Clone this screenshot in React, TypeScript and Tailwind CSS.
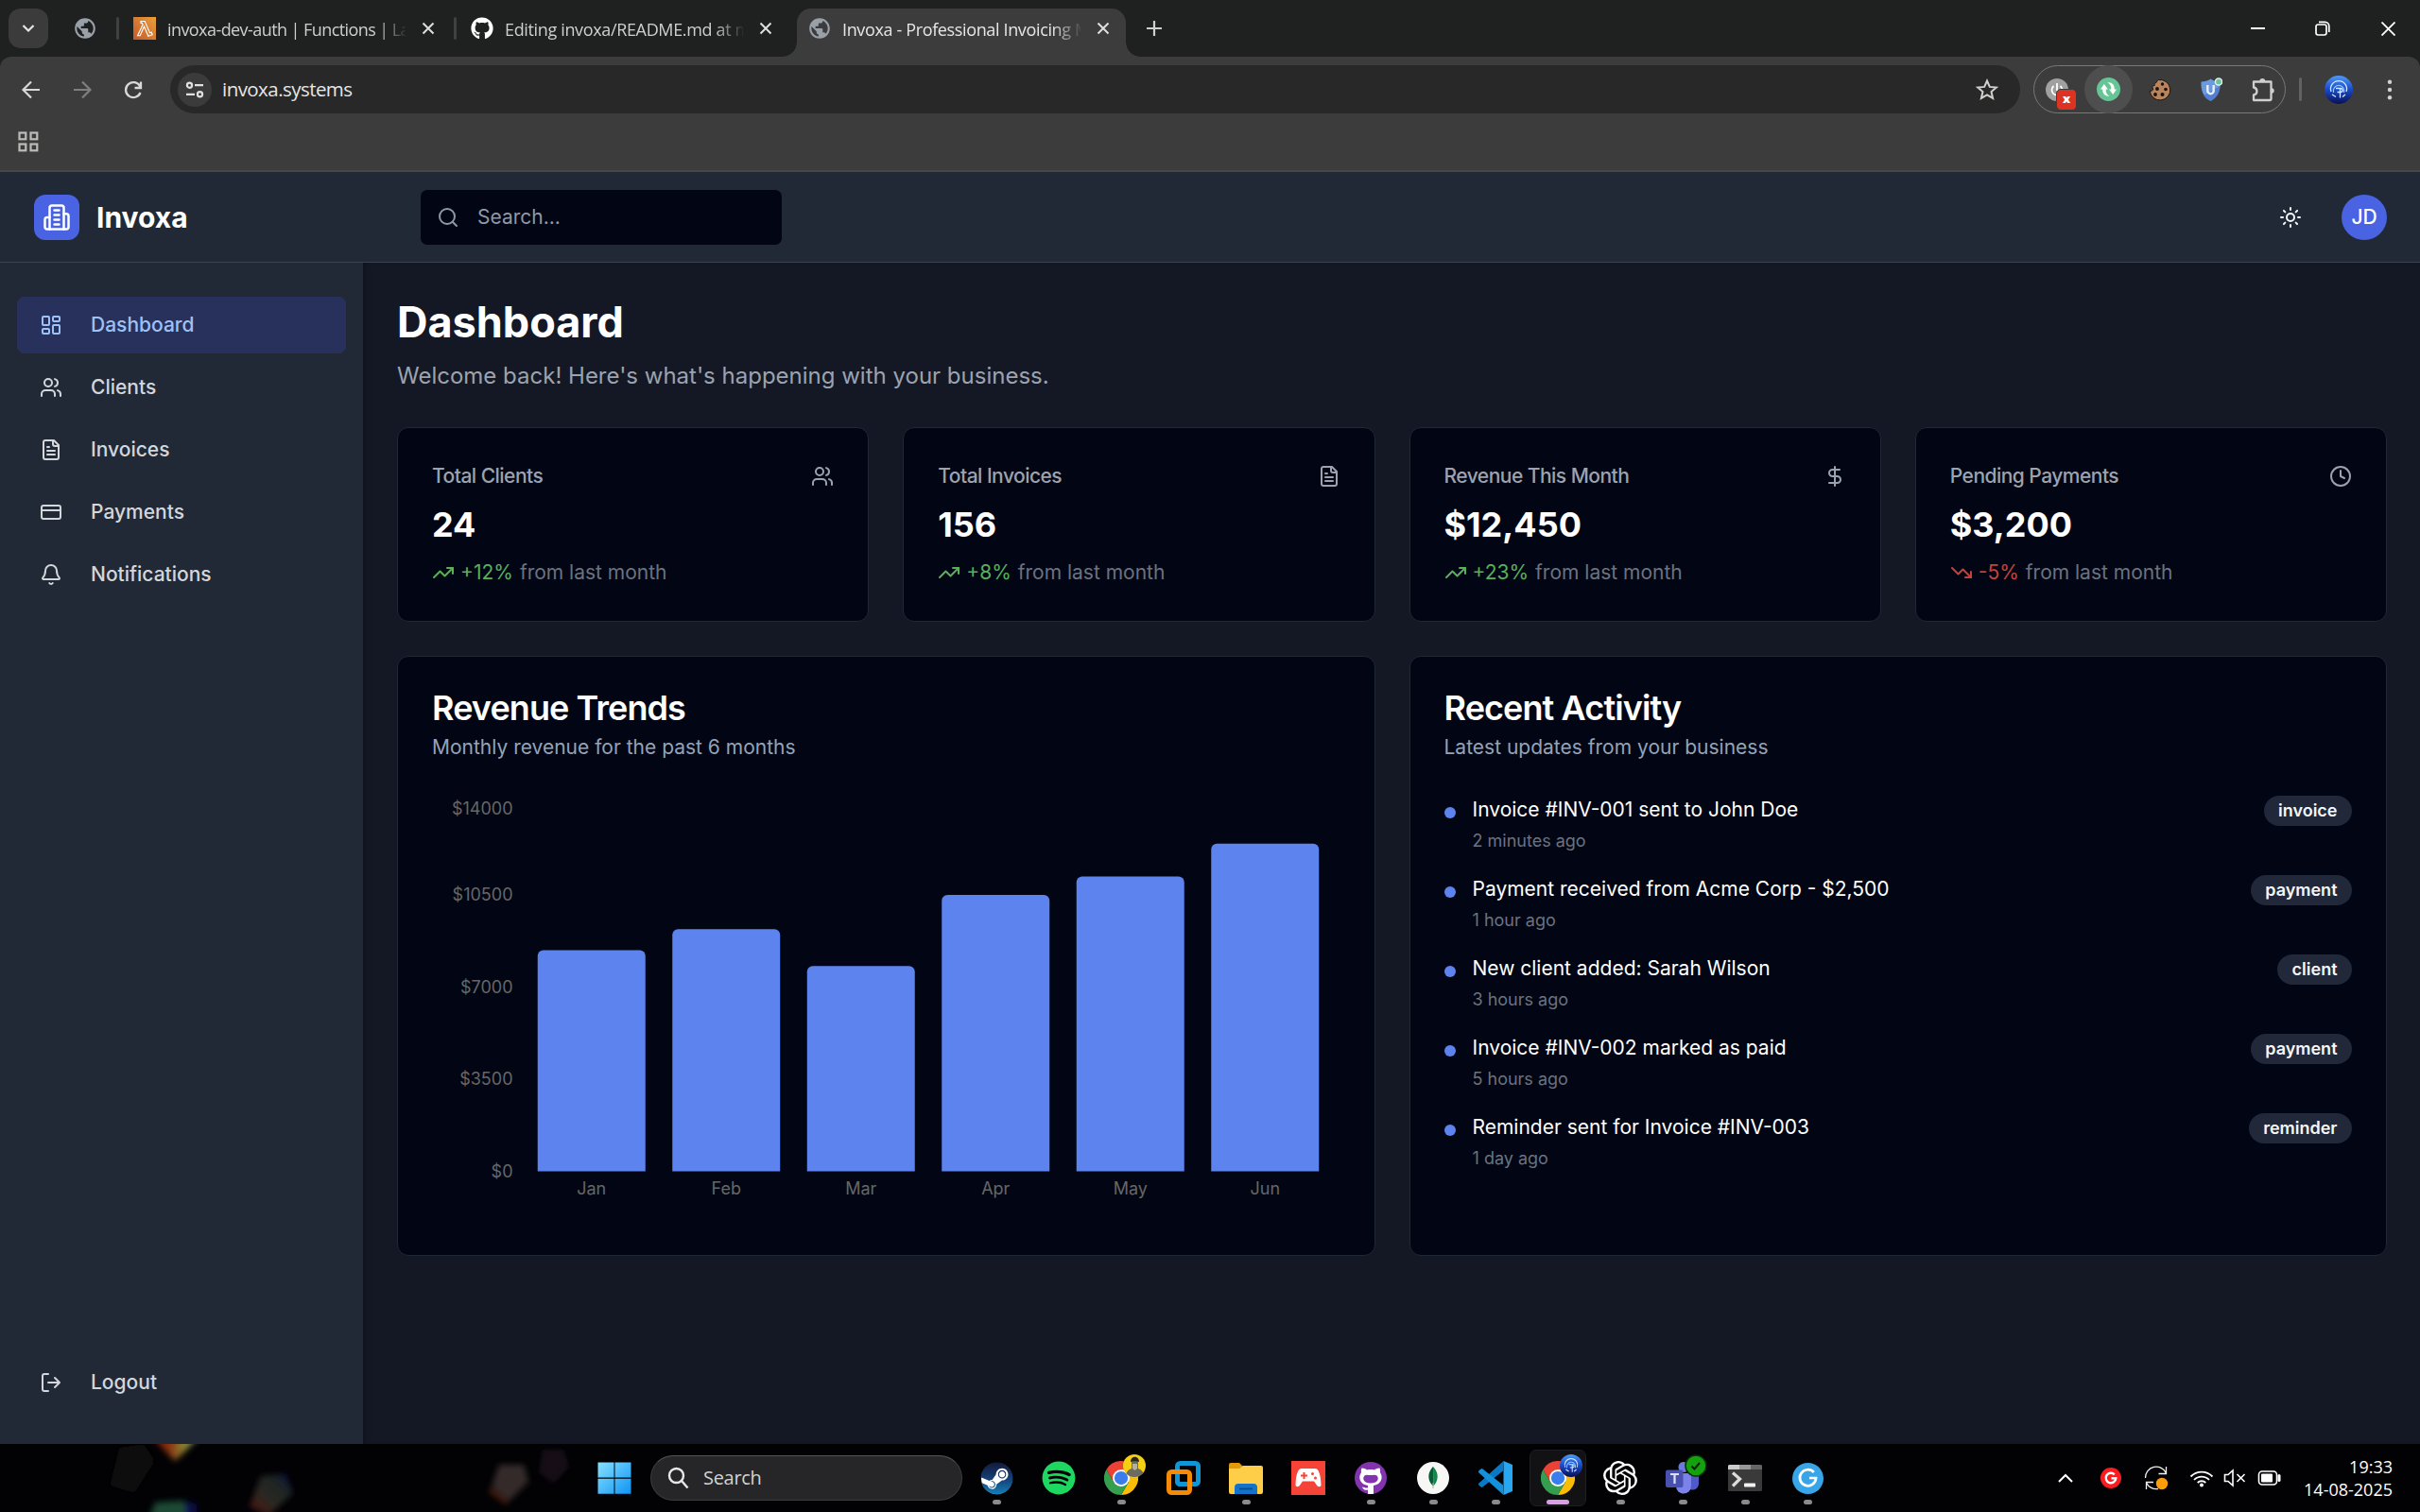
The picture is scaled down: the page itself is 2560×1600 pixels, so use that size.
import React from "react";
import { MdPublic } from "react-icons/md";
import { FaGithub, FaSpotify, FaSteam } from "react-icons/fa";
import { SiOpenai } from "react-icons/si";

type IconProps = { className?: string };

/* ---------- line icons ---------- */

function Line({ className = "size-6", sw = 2, children }: { className?: string; sw?: number; children: React.ReactNode }) {
  return (
    <svg viewBox="0 0 24 24" fill="none" stroke="currentColor" strokeWidth={sw} strokeLinecap="round" strokeLinejoin="round" className={"shrink-0 " + className}>
      {children}
    </svg>
  );
}

const BuildingIcon = (p: IconProps) => (
  <Line {...p}>
    <path d="M6 22V4a2 2 0 0 1 2-2h8a2 2 0 0 1 2 2v18Z" />
    <path d="M6 12H4a2 2 0 0 0-2 2v6a2 2 0 0 0 2 2h2" />
    <path d="M18 9h2a2 2 0 0 1 2 2v9a2 2 0 0 1-2 2h-2" />
    <path d="M10 6h4M10 10h4M10 14h4M10 18h4" />
  </Line>
);
const DashboardIcon = (p: IconProps) => (
  <Line {...p}>
    <rect width="7" height="9" x="3" y="3" rx="1" />
    <rect width="7" height="5" x="14" y="3" rx="1" />
    <rect width="7" height="9" x="14" y="12" rx="1" />
    <rect width="7" height="5" x="3" y="16" rx="1" />
  </Line>
);
const UsersIcon = (p: IconProps) => (
  <Line {...p}>
    <path d="M16 21v-2a4 4 0 0 0-4-4H6a4 4 0 0 0-4 4v2" />
    <circle cx="9" cy="7" r="4" />
    <path d="M22 21v-2a4 4 0 0 0-3-3.87" />
    <path d="M16 3.13a4 4 0 0 1 0 7.75" />
  </Line>
);
const FileIcon = (p: IconProps) => (
  <Line {...p}>
    <path d="M15 2H6a2 2 0 0 0-2 2v16a2 2 0 0 0 2 2h12a2 2 0 0 0 2-2V7Z" />
    <path d="M14 2v4a2 2 0 0 0 2 2h4" />
    <path d="M10 9H8M16 13H8M16 17H8" />
  </Line>
);
const CardIcon = (p: IconProps) => (
  <Line {...p}>
    <rect width="20" height="14" x="2" y="5" rx="2" />
    <path d="M2 10h20" />
  </Line>
);
const BellIcon = (p: IconProps) => (
  <Line {...p}>
    <path d="M10.268 21a2 2 0 0 0 3.464 0" />
    <path d="M3.262 15.326A1 1 0 0 0 4 17h16a1 1 0 0 0 .74-1.673C19.41 13.956 18 12.499 18 8A6 6 0 0 0 6 8c0 4.499-1.411 5.956-2.738 7.326" />
  </Line>
);
const LogoutIcon = (p: IconProps) => (
  <Line {...p}>
    <path d="M9 21H5a2 2 0 0 1-2-2V5a2 2 0 0 1 2-2h4" />
    <path d="m16 17 5-5-5-5M21 12H9" />
  </Line>
);
const SearchIcon = (p: IconProps) => (
  <Line {...p}>
    <circle cx="11" cy="11" r="8" />
    <path d="m21 21-4.3-4.3" />
  </Line>
);
const SunIcon = (p: IconProps) => (
  <Line {...p}>
    <circle cx="12" cy="12" r="4" />
    <path d="M12 2v2M12 20v2M4.93 4.93l1.41 1.41M17.66 17.66l1.41 1.41M2 12h2M20 12h2M6.34 17.66l-1.41 1.41M19.07 4.93l-1.41 1.41" />
  </Line>
);
const DollarIcon = (p: IconProps) => (
  <Line {...p}>
    <path d="M12 2v20M17 5H9.5a3.5 3.5 0 0 0 0 7h5a3.5 3.5 0 0 1 0 7H6" />
  </Line>
);
const ClockIcon = (p: IconProps) => (
  <Line {...p}>
    <circle cx="12" cy="12" r="10" />
    <path d="M12 6v6l4 2" />
  </Line>
);
const UpIcon = (p: IconProps) => (
  <Line {...p}>
    <path d="m22 7-8.5 8.5-5-5L2 17" />
    <path d="M16 7h6v6" />
  </Line>
);
const DownIcon = (p: IconProps) => (
  <Line {...p}>
    <path d="m22 17-8.5-8.5-5 5L2 7" />
    <path d="M16 17h6v-6" />
  </Line>
);

/* ---------- browser chrome ---------- */

const Close = () => (
  <svg viewBox="0 0 16 16" className="size-4 shrink-0 text-[#dededc]" stroke="currentColor" strokeWidth="2" fill="none">
    <path d="M2.5 2.5l11 11M13.5 2.5l-11 11" />
  </svg>
);

function TabTitle({ children, className }: { children: string; className: string }) {
  return (
    <div className={"w-[252px] whitespace-nowrap pt-[2px] text-[18px] leading-[26px] [mask-image:linear-gradient(to_right,black_88%,transparent_101%)] " + className}>
      {children}
    </div>
  );
}

function TabStrip() {
  return (
    <div className="flex h-[60px] items-center bg-[#1f2120] pl-[9px] text-[#cfcfcd]">
      <div className="flex size-[42px] items-center justify-center rounded-[13px] bg-[#3b3b3b]">
        <svg viewBox="0 0 16 16" className="size-4" stroke="#e6e6e4" strokeWidth="2.2" fill="none">
          <path d="M2.5 5l5.500 5.500L13.500 5" />
        </svg>
      </div>
      <MdPublic className="ml-[26px] size-[26px] text-[#9aa0a8]" />
      <div className="ml-[20px] h-6 w-[3px] rounded bg-[#3f403f]" />
      <svg viewBox="0 0 24 24" className="ml-[15px] size-6">
        <defs>
          <linearGradient id="lam" x1="0" y1="1" x2="1" y2="0">
            <stop offset="0" stopColor="#c3592b" />
            <stop offset="1" stopColor="#ec9f3a" />
          </linearGradient>
        </defs>
        <rect width="24" height="24" fill="url(#lam)" />
        <path d="M8 4.500h4.200l5.300 12.300 1.800-.6.9 2.500-4.300 1.500-4.400-10.200-4.300 9.800H4.500l5.600-11.700-.9-1.700H8z" fill="none" stroke="#fff" strokeWidth="1.100" />
      </svg>
      <div className="ml-3">
        <TabTitle className="tracking-[-0.57px]">invoxa-dev-auth | Functions | La</TabTitle>
      </div>
      <div className="ml-4"><Close /></div>
      <div className="ml-[19px] h-6 w-[3px] rounded bg-[#3f403f]" />
      <FaGithub className="ml-[15px] size-6 text-white" />
      <div className="ml-[12px]">
        <TabTitle className="tracking-[-0.35px]">Editing invoxa/README.md at m</TabTitle>
      </div>
      <div className="ml-[16px]"><Close /></div>
      <div className="relative ml-[25px] mt-[9px] flex h-[51px] w-[348px] items-center rounded-t-[15px] bg-[#3c3c3c] pb-[9px] pl-[11px] text-[#e6e6e4]">
        <div className="absolute -left-[15px] bottom-0 size-[15px] bg-[radial-gradient(circle_at_0_0,transparent_14.500px,#3c3c3c_15px)]" />
        <div className="absolute -right-[15px] bottom-0 size-[15px] bg-[radial-gradient(circle_at_100%_0,transparent_14.500px,#3c3c3c_15px)]" />
        <MdPublic className="size-[26px] text-[#9aa0a8]" />
        <div className="ml-[11px]">
          <TabTitle className="tracking-[-0.36px]">Invoxa - Professional Invoicing M</TabTitle>
        </div>
        <div className="ml-4"><Close /></div>
      </div>
      <svg viewBox="0 0 18 18" className="ml-[21px] size-[18px]" stroke="#d0d0ce" strokeWidth="2.200">
        <path d="M9 1v16M1 9h16" />
      </svg>
      <div className="ml-auto flex items-center pr-[26px]">
        <svg viewBox="0 0 15 15" className="size-[15px]" stroke="#fff" strokeWidth="2"><path d="M0 7h15" /></svg>
        <svg viewBox="0 0 16 16" className="ml-[53px] size-4" stroke="#fff" strokeWidth="1.700" fill="none">
          <rect x="1" y="4" width="11" height="11" rx="2.200" />
          <path d="M4 1.300h6.500a4.300 4.300 0 0 1 4.300 4.300V12" />
        </svg>
        <svg viewBox="0 0 15 15" className="ml-[54px] size-[15px]" stroke="#fff" strokeWidth="1.800"><path d="M.5.5l14 14M14.500.5l-14 14" /></svg>
      </div>
    </div>
  );
}

const Avatar = ({ className = "size-[30px]" }: IconProps) => (
  <svg viewBox="0 0 30 30" className={className}>
    <defs>
      <linearGradient id="ava" x1="0" y1="0" x2="0" y2="1">
        <stop offset="0" stopColor="#4f9af5" />
        <stop offset=".45" stopColor="#1d4fd0" />
        <stop offset="1" stopColor="#080f55" />
      </linearGradient>
    </defs>
    <circle cx="15" cy="15" r="15" fill="url(#ava)" />
    <g fill="none" stroke="#d6ecff" strokeWidth="1.300">
      <path d="M7 17a8.500 8.500 0 1 1 16 0" />
      <path d="M9.500 18a5.800 5.800 0 1 1 11 0" stroke="#8ccbff" />
      <path d="M12 13.500h5a2 2 0 0 1 0 4h-3.500M16.500 13.500v10M8 20l4 2.500M22 20l-3 2.500" />
    </g>
  </svg>
);

function Toolbar() {
  return (
    <div className="bg-[#1f2120]">
      <div className="h-[122px] rounded-t-[12px] border-b-2 border-[#474746] bg-[#3c3c3c]">
        <div className="flex h-[69px] items-center pl-[22px]">
          <svg viewBox="0 0 22 22" className="size-[22px]" stroke="#d8d8d6" strokeWidth="2.200" fill="none"><path d="M20 11H3M11 2.500L2.500 11l8.500 8.500" /></svg>
          <svg viewBox="0 0 22 22" className="ml-8 size-[22px]" stroke="#7f7f7e" strokeWidth="2.200" fill="none"><path d="M2 11h17M11 2.500l8.500 8.500-8.500 8.500" /></svg>
          <svg viewBox="0 0 22 22" className="ml-8 size-[22px]" stroke="#d8d8d6" strokeWidth="2.300" fill="none"><path d="M18.500 14a8 8 0 1 1-.3-6.500M19 2.500V9h-6.500" /></svg>
          <div className="ml-7 flex h-[51px] w-[1957px] items-center rounded-full bg-[#282828] pl-2 pr-[23px]">
            <div className="flex size-9 items-center justify-center rounded-full bg-[#3b3b3b]">
              <svg viewBox="0 0 20 20" className="size-5" stroke="#e0e0de" strokeWidth="2.200" fill="none">
                <circle cx="4.500" cy="5.200" r="2.600" /><path d="M10 5.200h9M1 14.800h9" /><circle cx="15.500" cy="14.800" r="2.600" />
              </svg>
            </div>
            <div className="ml-[11px] text-[20.500px] leading-none tracking-[-0.55px] text-[#e6e6e4]">invoxa.systems</div>
            <svg viewBox="0 0 24 24" className="ml-auto size-6" stroke="#d0d0ce" strokeWidth="2" fill="none"><path d="M12 2.500l2.800 6.400 7 .6-5.300 4.600 1.600 6.800-6.100-3.600-6.100 3.600 1.600-6.800L2.200 9.500l7-.6z" /></svg>
          </div>
          <div className="ml-[14px] flex h-[51px] w-[267px] items-center rounded-full border border-[#787878] pl-[12px]">
            <div className="relative size-6">
              <svg viewBox="0 0 24 24" className="size-6" fill="none"><circle cx="12" cy="12" r="12" fill="#a0a0a0" /><path d="M8.500 8a5.500 5.500 0 1 0 7 0M12 5v8" stroke="#fff" strokeWidth="1.800" /></svg>
              <div className="absolute left-[11px] top-[11px] flex h-[23px] w-[22px] items-center justify-center rounded-[5px] border border-[#3c3c3c] bg-[#dd3322] pb-px text-[13px] font-extrabold leading-none text-white">x</div>
            </div>
            <div className="ml-[17px] flex size-[51px] shrink-0 items-center justify-center rounded-full bg-[#4e4e4e]">
              <svg viewBox="0 0 24 24" className="size-[25px]">
                <circle cx="12" cy="12" r="12" fill="#66c596" />
                <path d="M11 5.200c4.600-.6 7.300 2.600 7 6.800h2.200l-3.700 5.300-4-5.300h2.200c.2-3.300-1-5.600-3.700-6.800z" fill="#fff" />
                <path d="M13 18.800c-4.600.6-7.300-2.600-7-6.800H3.800l3.700-5.300 4 5.300H9.300c-.2 3.300 1 5.600 3.700 6.800z" fill="#fff" />
              </svg>
            </div>
            <svg viewBox="0 0 24 24" className="ml-[17px] size-6">
              <path d="M10.500 1.500A10.800 10.800 0 1 1 1.200 13c2 .6 3.300-.2 3.600-2-1.600-1.500-.8-3.500 1.500-3.500-.6-1.800.2-3 1.700-3C8.500 3.500 9 2 10.500 1.500z" fill="#b8835d" stroke="#1b1512" strokeWidth="1" />
              <g fill="#17110f"><circle cx="14.500" cy="6" r="1.700" /><circle cx="9" cy="11" r="1.900" /><circle cx="18" cy="11.500" r="1.800" /><circle cx="7" cy="17" r="1.900" /><circle cx="14.500" cy="17" r="2" /></g>
            </svg>
            <svg viewBox="0 0 24 26" className="ml-[30px] h-[26px] w-6">
              <path d="M11.500 1.500C15 4 18 4 21.500 4.500c.5 9-2 16-10 20.500C3.500 20.500 1 13.500 1.500 4.500 5 4 8 4 11.500 1.500z" fill="#6a9be0" />
              <path d="M11.500 25c8-4.500 10.500-11.500 10-16L4 19c1.600 2.500 4 4.500 7.500 6z" fill="#4c72c8" opacity=".7" />
              <path d="M8.300 8v6a3.200 3.200 0 0 0 6.400 0V8" fill="none" stroke="#e6f0fc" strokeWidth="2.400" />
              <circle cx="20" cy="4.500" r="3.600" fill="#6cc29c" stroke="#e4efe9" strokeWidth="1.500" />
            </svg>
            <svg viewBox="0 0 26 26" className="ml-[30px] size-[26px]" fill="none" stroke="#cfcfcd" strokeWidth="2.300" strokeLinejoin="round">
              <path d="M3 4.500h18.500v18.500a1 1 0 0 1-1 1H3v-5.500c4.600-.6 4.600-7.200 0-8z" />
              <path d="M9.300 4a3 3 0 0 1 6 0zM22 11.300a2.700 2.700 0 0 1 0 5.400z" fill="#cfcfcd" stroke="none" />
            </svg>
          </div>
          <div className="ml-[14px] h-[25px] w-[3px] rounded bg-[#626262]" />
          <Avatar className="ml-6 size-[30px]" />
          <svg viewBox="0 0 6 22" className="ml-9 h-[22px] w-[6px]" fill="#d2d2d0"><circle cx="3" cy="2.800" r="2.200" /><circle cx="3" cy="11" r="2.200" /><circle cx="3" cy="19.200" r="2.200" /></svg>
        </div>
        <div className="flex h-[42px] items-center pl-[19px]">
          <svg viewBox="0 0 22 22" className="size-[22px]" fill="none" stroke="#bcbcba" strokeWidth="2.200">
            <rect x="1.500" y="1.500" width="6.800" height="6.800" /><rect x="13.500" y="1.500" width="6.800" height="6.800" /><rect x="1.500" y="13.500" width="6.800" height="6.800" /><rect x="13.500" y="13.500" width="6.800" height="6.800" />
          </svg>
        </div>
      </div>
    </div>
  );
}

/* ---------- application ---------- */

function AppHeader() {
  return (
    <header className="relative z-10 flex h-24 shrink-0 items-center border-b border-[#3a4350] bg-[#212936] pl-9 pr-[35px]">
      <div className="flex size-12 items-center justify-center rounded-xl bg-[#4963e3] text-white"><BuildingIcon className="size-[30px]" /></div>
      <div className="ml-[18px] w-[343px] text-[30px] font-bold leading-none text-white">Invoxa</div>
      <div className="flex h-[58px] w-[382px] items-center rounded-[7px] bg-[#020614] pl-[17px] text-[#8f98a8]">
        <SearchIcon />
        <span className="ml-[19px] text-[21px] leading-none">Search...</span>
      </div>
      <SunIcon className="ml-auto size-6 text-[#f4f6f8]" />
      <div className="ml-[42px] flex size-12 items-center justify-center rounded-full bg-[#4963e3] text-[21px] font-medium text-white">JD</div>
    </header>
  );
}

const nav = [
  { label: "Dashboard", Icon: DashboardIcon, active: true },
  { label: "Clients", Icon: UsersIcon },
  { label: "Invoices", Icon: FileIcon },
  { label: "Payments", Icon: CardIcon },
  { label: "Notifications", Icon: BellIcon },
];

function Sidebar() {
  return (
    <aside className="flex w-96 shrink-0 flex-col bg-[#212936] px-[18px] pb-[35px] pt-9">
      <nav className="flex flex-col gap-1.5">
        {nav.map(({ label, Icon, active }) => (
          <div key={label} className={"flex h-[60px] items-center gap-[30px] rounded-[8px] pl-6 text-[21px] font-medium " + (active ? "bg-[#28315c] text-[#9dc2f7]" : "text-[#d3d6db]")}>
            <Icon />
            {label}
          </div>
        ))}
      </nav>
      <div className="mt-auto flex h-[60px] items-center gap-[30px] pl-6 text-[21px] font-medium text-[#d3d6db]">
        <LogoutIcon />
        Logout
      </div>
    </aside>
  );
}

const stats = [
  { title: "Total Clients", value: "24", change: "+12%", Icon: UsersIcon },
  { title: "Total Invoices", value: "156", change: "+8%", Icon: FileIcon },
  { title: "Revenue This Month", value: "$12,450", change: "+23%", Icon: DollarIcon },
  { title: "Pending Payments", value: "$3,200", change: "-5%", Icon: ClockIcon },
];

const cardClass = "rounded-xl border border-[#202736] bg-[#020614] p-9";

function StatCard({ title, value, change, Icon }: (typeof stats)[number]) {
  const down = change.startsWith("-");
  return (
    <div className={cardClass}>
      <div className="flex h-[30px] items-center justify-between text-[#9ca3af]">
        <span className="text-[21px] font-medium tracking-tight">{title}</span>
        <Icon />
      </div>
      <div className="mt-3 text-[36px] font-bold leading-[48px] text-white">{value}</div>
      <div className="mt-3 flex h-[30px] items-center text-[21px] leading-[30px]">
        <span className={down ? "flex items-center gap-1.5 text-[#c9403a]" : "flex items-center gap-1.5 text-[#58b058]"}>
          {down ? <DownIcon /> : <UpIcon />}
          {change}
        </span>
        <span className="ml-[7px] text-[#6b7280]">from last month</span>
      </div>
    </div>
  );
}

function CardHeading({ title, text }: { title: string; text: string }) {
  return (
    <div>
      <h3 className="text-[36px] font-semibold leading-9 tracking-tight text-white">{title}</h3>
      <p className="mt-[9px] text-[21px] leading-[30px] text-[#94a3b8]">{text}</p>
    </div>
  );
}

const revenue = [
  { m: "Jan", v: 8400 },
  { m: "Feb", v: 9200 },
  { m: "Mar", v: 7800 },
  { m: "Apr", v: 10500 },
  { m: "May", v: 11200 },
  { m: "Jun", v: 12450 },
];
const ticks = [
  { t: "$14000", y: 13 },
  { t: "$10500", y: 104.5 },
  { t: "$7000", y: 202.5 },
  { t: "$3500", y: 299.5 },
  { t: "$0", y: 397.5 },
];

function RevenueChart() {
  return (
    <svg viewBox="0 0 960 450" className="mt-9 block h-[450px] w-[960px] text-[18px]" fill="#666666">
      {ticks.map((k) => (
        <text key={k.t} x="85.500" y={k.y + 6.500} textAnchor="end">{k.t}</text>
      ))}
      {revenue.map((r, i) => {
        const x = 97.5 + i * 142.5 + 14.25;
        const h = (r.v / 14000) * 390;
        const y = 397.5 - h;
        return (
          <g key={r.m}>
            <path d={`M${x} ${397.5}V${y + 6}a6 6 0 0 1 6-6h102a6 6 0 0 1 6 6V397.500Z`} fill="#5d83ee" />
            <text x={x + 57} y="422" textAnchor="middle">{r.m}</text>
          </g>
        );
      })}
    </svg>
  );
}

const activity = [
  { text: "Invoice #INV-001 sent to John Doe", time: "2 minutes ago", tag: "invoice" },
  { text: "Payment received from Acme Corp - $2,500", time: "1 hour ago", tag: "payment" },
  { text: "New client added: Sarah Wilson", time: "3 hours ago", tag: "client" },
  { text: "Invoice #INV-002 marked as paid", time: "5 hours ago", tag: "payment" },
  { text: "Reminder sent for Invoice #INV-003", time: "1 day ago", tag: "reminder" },
];

function Dashboard() {
  return (
    <main className="flex-1 bg-[#141825] py-9 pl-9 pr-[35px] shadow-[inset_6px_0_6px_-5px_#0e121d]">
      <h1 className="text-[45px] font-bold leading-[54px] text-white">Dashboard</h1>
      <p className="mt-3 text-2xl leading-9 text-[#9ca3af]">Welcome back! Here's what's happening with your business.</p>
      <div className="mt-9 grid grid-cols-4 gap-9">
        {stats.map((s) => <StatCard key={s.title} {...s} />)}
      </div>
      <div className="mt-9 grid grid-cols-2 gap-9">
        <div className={cardClass}>
          <CardHeading title="Revenue Trends" text="Monthly revenue for the past 6 months" />
          <RevenueChart />
        </div>
        <div className={cardClass}>
          <CardHeading title="Recent Activity" text="Latest updates from your business" />
          <ul className="mt-9 flex flex-col gap-6">
            {activity.map((a) => (
              <li key={a.text} className="flex items-start">
                <span className="mt-3 size-3 rounded-full bg-[#5d83ee]" />
                <div className="ml-[18px]">
                  <p className="text-[21px] leading-[30px] text-white">{a.text}</p>
                  <p className="mt-1.5 text-[18px] leading-6 text-[#6b7280]">{a.time}</p>
                </div>
                <span className="ml-auto rounded-full bg-[#20283a] px-[15.500px] py-1 text-[18px] font-semibold leading-6 text-[#f4f7fa]">{a.tag}</span>
              </li>
            ))}
          </ul>
        </div>
      </div>
    </main>
  );
}

/* ---------- taskbar ---------- */

const ChromeLogo = () => (
  <svg viewBox="0 0 48 48" className="size-9">
    <path d="M24 12h20.800A24 24 0 0 1 24 48l10.400-18z" fill="#fbbc05" />
    <path d="M13.600 30L3.200 12A24 24 0 0 0 24 48l10.400-18z" fill="#34a04f" />
    <path d="M3.200 12A24 24 0 0 1 44.800 12H24L13.600 30z" fill="#ea4335" />
    <circle cx="24" cy="24" r="12" fill="#fff" />
    <circle cx="24" cy="24" r="9.500" fill="#3b7ded" />
  </svg>
);

const Steam = () => (
  <div className="relative flex size-[35px] items-center justify-center">
    <svg viewBox="0 0 35 35" className="absolute size-[35px]">
      <defs>
        <linearGradient id="steam" x1="0" y1="0" x2="0" y2="1">
          <stop offset="0" stopColor="#131a3c" />
          <stop offset=".55" stopColor="#15447a" />
          <stop offset="1" stopColor="#1480b8" />
        </linearGradient>
      </defs>
      <circle cx="17.500" cy="17.500" r="16.500" fill="#fff" />
    </svg>
    <FaSteam className="relative size-[35px]" fill="url(#steam)" />
  </div>
);

const Vmware = () => (
  <svg viewBox="0 0 36 36" className="size-9" fill="none" strokeWidth="5">
    <rect x="11.500" y="2.500" width="22" height="22" rx="3" stroke="#0e96d6" />
    <rect x="2.500" y="11.500" width="22" height="22" rx="3" stroke="#f58a07" />
    <path d="M11.500 17v4.500a3 3 0 0 0 3 3H22" stroke="#0e96d6" />
  </svg>
);

const Explorer = () => (
  <svg viewBox="0 0 36 36" className="size-9">
    <path d="M0 4a2 2 0 0 1 2-2h9l4 4-3 4H0z" fill="#e29a09" />
    <path d="M0 8h11l4-3h19a2 2 0 0 1 2 2v26a2 2 0 0 1-2 2H2a2 2 0 0 1-2-2z" fill="#ffce48" />
    <path d="M6 35V28a4 4 0 0 1 4-4h16a4 4 0 0 1 4 4v7z" fill="#1273c9" />
    <path d="M11 29.500h14" stroke="#0a4a8c" strokeWidth="1.800" />
  </svg>
);

const Gamepad = () => (
  <svg viewBox="0 0 36 36" className="size-9">
    <rect width="36" height="36" fill="#f54337" />
    <path d="M11 8h14c4 0 6 6 6.500 17 0 3-3.500 3-5 0L24 21.500H12L9.500 25c-1.500 3-5 3-5 0C5 14 7 8 11 8z" fill="#fff" />
    <path d="M10 15.500h7M13.500 12v7" stroke="#f54337" strokeWidth="2" />
    <circle cx="22.500" cy="13.500" r="1.500" fill="#f54337" /><circle cx="25.500" cy="18" r="1.500" fill="#f54337" />
  </svg>
);

const GithubDesk = () => (
  <div className="flex size-[34px] items-center justify-center overflow-hidden rounded-full bg-[#8333ad]">
    <svg viewBox="0 0 34 34" className="size-[34px]">
      <path d="M7.500 6.500c3 0 4.500 1.200 5.500 2 2.500-.6 5.500-.6 8 0 1-.8 2.500-2 5.500-2 .9 2 .6 3.500.4 4.500 4 5.500 1 13-6.900 14V34h-6v-4.500c-4 1-5-1-6-3 2 0 3 1.500 6 1V25C6 24 3 16.500 7.100 11c-.3-1-.5-2.500.4-4.500z" fill="#fff" />
      <path d="M10.500 14.500c2-1.300 4-.4 6.500-.4s4.500-.9 6.500.4c3 3.500.5 8-6.500 8s-9.500-4.500-6.500-8z" fill="#8333ad" />
    </svg>
  </div>
);

const Mongo = () => (
  <div className="flex size-[34px] items-center justify-center rounded-full bg-[#f7f8f6]">
    <svg viewBox="0 0 34 34" className="size-[34px]">
      <path d="M17 5c4.500 5 5 9 4.500 12.500S19 24 17.300 25.500z" fill="#12894c" />
      <path d="M17 5c-4.500 5-5 9-4.500 12.500S15 24 17.300 25.500z" fill="#0a5c38" />
      <path d="M17 22v6" stroke="#9fb5a8" strokeWidth="1" />
    </svg>
  </div>
);

const VsCode = () => (
  <svg viewBox="0 0 36 36" className="size-9">
    <path d="M26 10.500L4.500 27.500a1.500 1.500 0 0 1-2 0L.5 25.700a1.500 1.500 0 0 1 0-2.200L26.500 0z" fill="#0a78c4" />
    <path d="M26 25.500L4.500 8.500a1.500 1.500 0 0 0-2 0L.5 10.300a1.500 1.500 0 0 0 0 2.200L26.500 36z" fill="#1490dc" />
    <path d="M26.500 0L36 4v28l-9.500 4z" fill="#27a7f1" />
  </svg>
);

const Teams = () => (
  <svg viewBox="0 0 36 36" className="size-9">
    <circle cx="19" cy="6.500" r="5.500" fill="#6f78dc" />
    <circle cx="30" cy="8.500" r="4" fill="#5059c9" />
    <path d="M24 13h11v11a6.500 6.500 0 0 1-9 6z" fill="#5059c9" />
    <path d="M11 13h16v13.500a8 8 0 0 1-16 0z" fill="#7b83eb" />
    <rect x="0" y="9.500" width="18.500" height="18.500" rx="2" fill="#4951ae" />
    <path d="M5 14h9M9.500 14v10" stroke="#dfe1ff" strokeWidth="2.200" />
  </svg>
);

const Terminal = () => (
  <svg viewBox="0 0 36 36" className="size-9">
    <rect x="0" y="4" width="36" height="28" rx="1.500" fill="#3a3a3a" />
    <path d="M0 9V5.500A1.500 1.500 0 0 1 1.500 4H12v5z" fill="#cbcbcb" />
    <path d="M12 4h12v5H12z" fill="#979797" />
    <path d="M24 4h10.500A1.500 1.500 0 0 1 36 5.500V9H24z" fill="#666" />
    <path d="M5 12.500l7.500 6.500L5 26.500" fill="none" stroke="#dcdcdc" strokeWidth="3.200" />
    <rect x="17" y="23.500" width="12" height="4" rx=".8" fill="#f0f0f0" />
  </svg>
);

const GApp = () => (
  <div className="flex size-[33px] items-center justify-center rounded-full bg-[#37a5e8]">
    <svg viewBox="0 0 34 34" className="size-[34px]" fill="none" stroke="#fff" strokeWidth="2.800">
      <path d="M23.500 10.800a8.800 8.800 0 1 0 2.300 6.200H18.500" />
    </svg>
  </div>
);

function Badge({ children }: { children: React.ReactNode }) {
  return <div className="absolute -top-[7px] left-[20px]">{children}</div>;
}

const PhotoBadge = () => (
  <svg viewBox="0 0 24 24" className="size-6">
    <clipPath id="pb"><circle cx="12" cy="12" r="12" /></clipPath>
    <g clipPath="url(#pb)">
      <rect width="24" height="24" fill="#f5cf12" />
      <path d="M3 24c0-6 3-8 6-9V9a3.500 3.500 0 0 1 7 0v6c3 1 6 3 6 9z" fill="#6d6a60" />
      <path d="M8 8c0-7 9-7 9 0-2-1-7-1-9 0z" fill="#26251f" />
      <path d="M10 10h5v5l-2.500 2L10 15z" fill="#b5b0a2" />
    </g>
  </svg>
);

const apps: { icon: React.ReactNode; run?: boolean; active?: boolean; badge?: React.ReactNode }[] = [
  { icon: <Steam />, run: true },
  { icon: <FaSpotify className="size-9 text-[#1ed760]" /> },
  { icon: <ChromeLogo />, run: true, badge: <PhotoBadge /> },
  { icon: <Vmware /> },
  { icon: <Explorer />, run: true },
  { icon: <Gamepad /> },
  { icon: <GithubDesk />, run: true },
  { icon: <Mongo />, run: true },
  { icon: <VsCode />, run: true },
  { icon: <ChromeLogo />, active: true, badge: <Avatar className="size-6" /> },
  { icon: <SiOpenai className="size-9 text-white" />, run: true },
  {
    icon: <Teams />,
    run: true,
    badge: (
      <svg viewBox="0 0 24 24" className="size-6"><circle cx="12" cy="12" r="11" fill="#13a10e" stroke="#0a2a08" strokeWidth="1.500" /><path d="M7.500 12.500l3 3 5.500-6.500" fill="none" stroke="#071d06" strokeWidth="2" /></svg>
    ),
  },
  { icon: <Terminal />, run: true },
  { icon: <GApp />, run: true },
];

function Bokeh() {
  return (
    <svg viewBox="0 0 700 72" className="absolute left-0 top-0 h-[72px] w-[700px]">
      <defs>
        <filter id="bk" x="-20%" y="-20%" width="140%" height="140%"><feGaussianBlur stdDeviation="3" /></filter>
        <linearGradient id="b1" x1="0" y1="0" x2="1" y2="0">
          <stop offset="0" stopColor="#7a0d0d" /><stop offset=".4" stopColor="#8a3a12" /><stop offset=".7" stopColor="#8c8b34" /><stop offset="1" stopColor="#55666a" />
        </linearGradient>
        <linearGradient id="b2" x1="0" y1="1" x2="1" y2="0">
          <stop offset="0" stopColor="#571111" /><stop offset=".4" stopColor="#2b2720" /><stop offset=".75" stopColor="#1c2426" /><stop offset="1" stopColor="#060a50" />
        </linearGradient>
      </defs>
      <g filter="url(#bk)">
        <path d="M162-6h48l-25 24z" fill="url(#b1)" />
        <path d="M126 4l26-4 12 18-22 34-26-8z" fill="#0e0b0b" />
        <path d="M276 34l26-2 8 20-26 24-20-10z" fill="url(#b2)" />
        <path d="M164 62l30-2 6 18h-42z" fill="#1a4a34" />
        <path d="M196 60l12 4v12h-12z" fill="#0b0f4c" />
        <path d="M528 22h26l5 18-20 20-19-15z" fill="#352b2b" />
        <path d="M519 46l20 15-4 3-18-13z" fill="#4a1e10" />
        <path d="M574 6h22l6 18-16 18-16-12z" fill="#141114" />
      </g>
    </svg>
  );
}

function Taskbar() {
  return (
    <footer className="relative flex h-[72px] shrink-0 items-center overflow-hidden bg-[#020205] font-['Open_Sans','Noto_Sans',sans-serif]">
      <Bokeh />
      <svg viewBox="0 0 36 36" className="relative ml-[632px] size-9">
        <defs>
          <linearGradient id="win" gradientUnits="userSpaceOnUse" x1="0" y1="0" x2="36" y2="36"><stop offset="0" stopColor="#8be3ff" /><stop offset="1" stopColor="#0b92f5" /></linearGradient>
        </defs>
        <path d="M.5 1.500h17v16H.5zM18.500 1.500h17v16h-17zM.5 18.700h17v16H.5zM18.500 18.700h17v16h-17z" fill="url(#win)" />
      </svg>
      <div className="relative ml-5 flex h-12 w-[330px] items-center rounded-full border border-[#3c3b40] border-t-[#55545a] bg-[#262629] pl-4 text-[#d2d2d2]">
        <svg viewBox="0 0 24 24" className="size-6" fill="none" stroke="#e8e8ea" strokeWidth="2.400"><circle cx="10.500" cy="9.500" r="7.500" /><path d="M16 15l6.500 7.500" /></svg>
        <span className="ml-[15px] text-[20px] leading-none tracking-[-0.3px]">Search</span>
      </div>
      <div className="ml-[3px] flex">
        {apps.map((a, i) => (
          <div key={i} className={"relative mx-[3px] flex size-[60px] items-center justify-center rounded-[7px] " + (a.active ? "border border-[#1f1f23] bg-[#121215]" : "")}>
            <div className="relative flex size-9 items-center justify-center">
              {a.icon}
              {a.badge && <Badge>{a.badge}</Badge>}
            </div>
            {a.run && <div className="absolute bottom-0.5 h-[5px] w-[9px] rounded-full bg-[#8b8b8b]" />}
            {a.active && <div className="absolute bottom-px h-[5px] w-6 rounded-full bg-[#d99ee6]" />}
          </div>
        ))}
      </div>
      <div className="ml-auto flex items-center pr-[29px] text-white">
        <svg viewBox="0 0 16 10" className="h-[10px] w-4" fill="none" stroke="#fff" strokeWidth="2"><path d="M1 9l7-7 7 7" /></svg>
        <svg viewBox="0 0 22 22" className="ml-[29px] size-[22px]"><circle cx="11" cy="11" r="11" fill="#f91d20" /><path d="M14.800 7.300a5.300 5.300 0 1 0 1.500 4H11.500" fill="none" stroke="#fff" strokeWidth="2.400" /></svg>
        <svg viewBox="0 0 26 26" className="ml-6 size-[26px]" fill="none" stroke="#f2f2f2" strokeWidth="1.300">
          <path d="M1.500 13A11.500 11.500 0 0 1 23.500 8M23.500 1v7.500h-8M15 24.500A11.500 11.500 0 0 1 2.500 18M2.500 25v-7.500h7.500" />
          <circle cx="19" cy="19" r="6.200" fill="#ff9c0a" stroke="none" />
        </svg>
        <svg viewBox="0 0 26 20" className="ml-[22px] h-5 w-[26px]" fill="none" stroke="#fff" strokeWidth="1.800">
          <path d="M1.500 8.500a16 16 0 0 1 23 0M5 12a11 11 0 0 1 16 0M8.700 15a6.200 6.200 0 0 1 8.600 0" />
          <circle cx="13" cy="17.500" r="2" fill="#fff" stroke="none" />
        </svg>
        <svg viewBox="0 0 24 20" className="ml-[10px] h-5 w-6" fill="none" stroke="#fff" strokeWidth="1.600">
          <path d="M1.500 6.500H5L10 2v16l-5-4.500H1.500zM14.500 6l8 8M22.500 6l-8 8" />
        </svg>
        <svg viewBox="0 0 25 18" className="ml-3 h-[18px] w-[25px]" fill="none" stroke="#fff" strokeWidth="1.600">
          <rect x="1.500" y="2" width="19" height="14" rx="3.500" /><rect x="4" y="4.500" width="12" height="9" rx="1" fill="#fff" stroke="none" /><path d="M23 6.500v5" strokeWidth="3" strokeLinecap="round" />
        </svg>
        <div className="w-[118px] text-right text-[18px] leading-6">
          <div>19:33</div>
          <div>14-08-2025</div>
        </div>
      </div>
    </footer>
  );
}

export default function App() {
  return (
    <div className="flex h-[1600px] w-[2560px] flex-col overflow-hidden bg-[#141825] font-['Inter',sans-serif]">
      <div className="shrink-0 font-['Open_Sans','Noto_Sans',sans-serif]">
        <TabStrip />
        <Toolbar />
      </div>
      <AppHeader />
      <div className="flex min-h-0 flex-1">
        <Sidebar />
        <Dashboard />
      </div>
      <Taskbar />
    </div>
  );
}
